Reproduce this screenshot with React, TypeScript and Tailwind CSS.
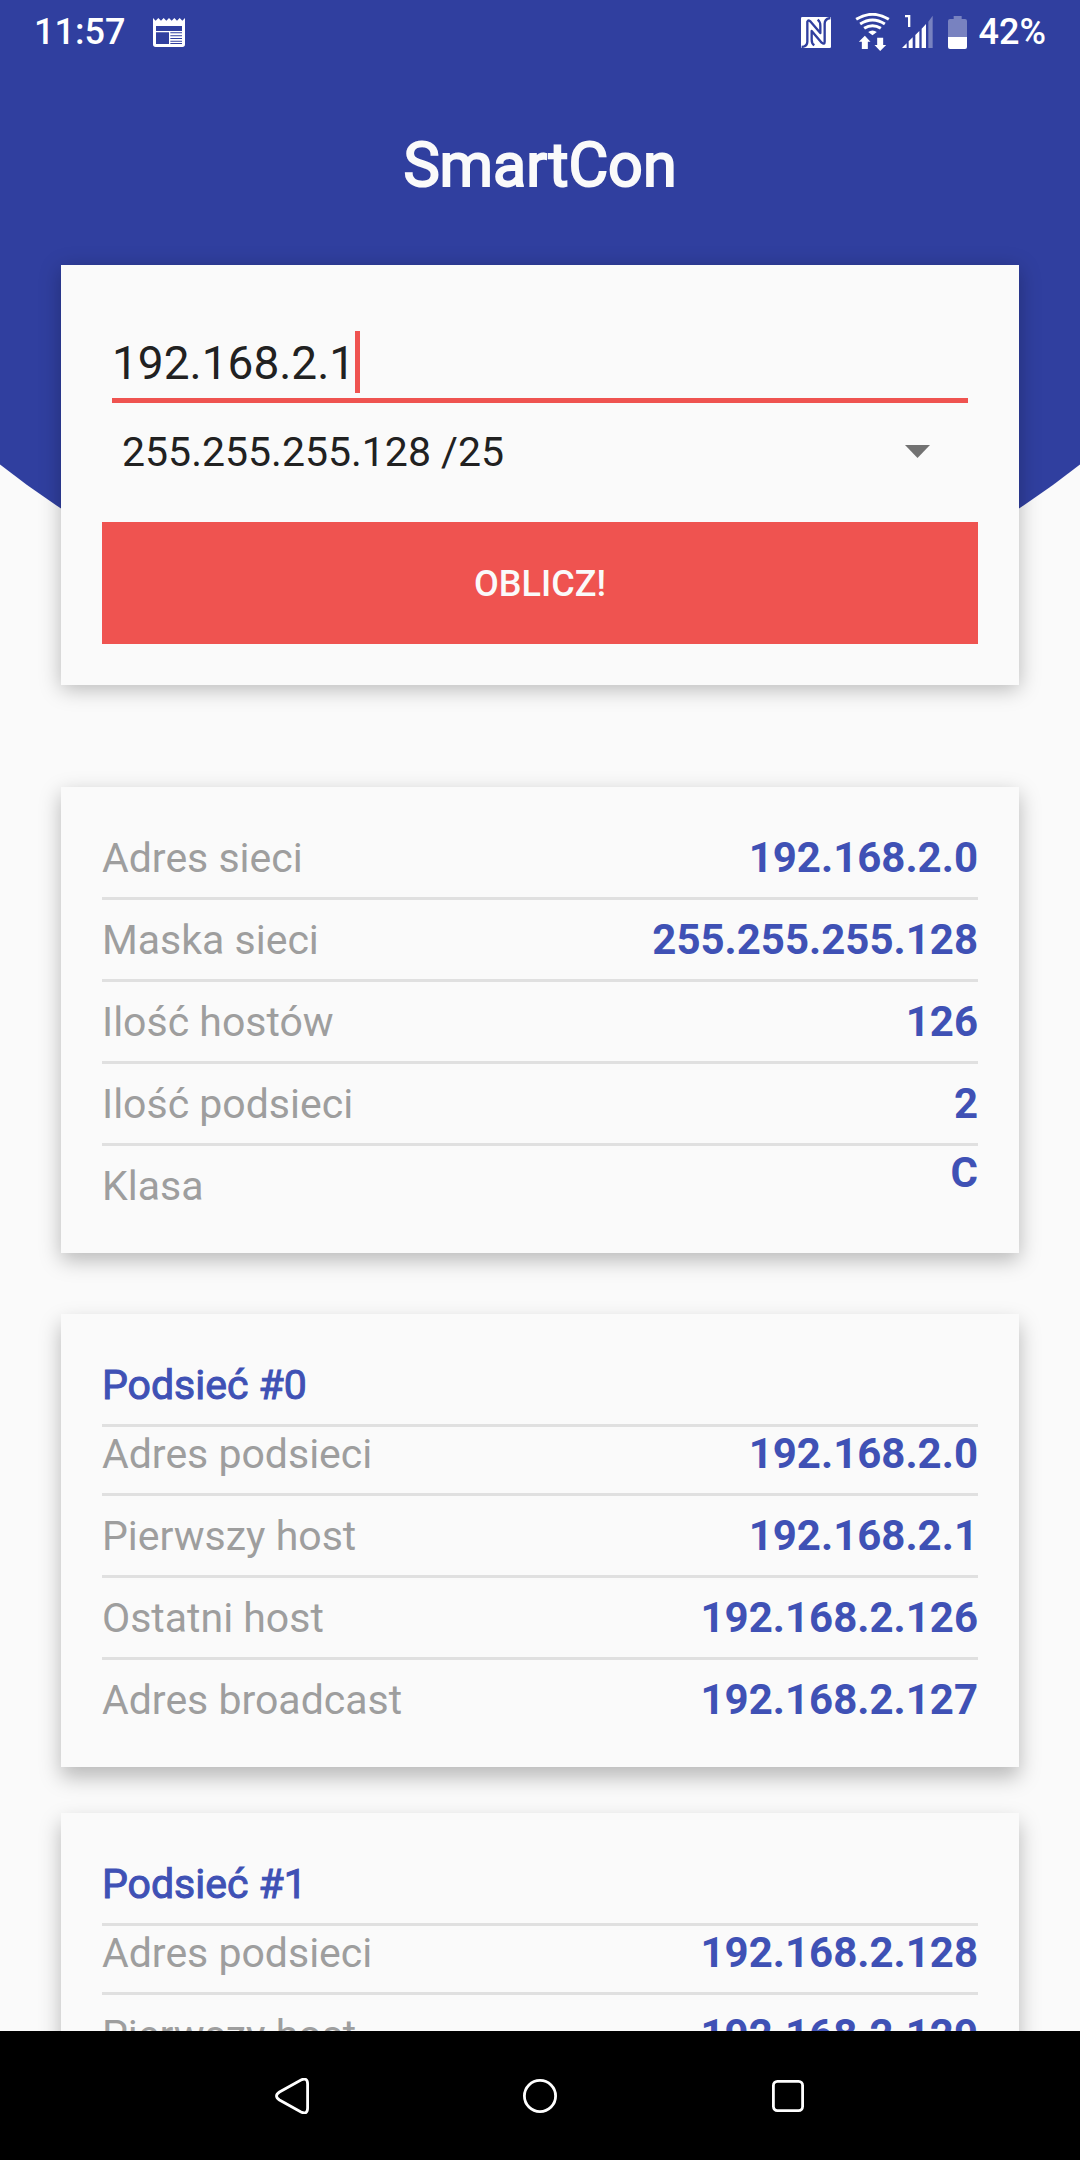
import { useState } from "react";
import type { ReactNode } from "react";

type Entry = { label: string; value: string };

const MASKS = [
  "255.255.255.0 /24",
  "255.255.255.128 /25",
  "255.255.255.192 /26",
  "255.255.255.224 /27",
];

const NETWORK: Entry[] = [
  { label: "Adres sieci", value: "192.168.2.0" },
  { label: "Maska sieci", value: "255.255.255.128" },
  { label: "Ilość hostów", value: "126" },
  { label: "Ilość podsieci", value: "2" },
  { label: "Klasa", value: "C" },
];

const SUBNETS: { title: string; entries: Entry[] }[] = [
  {
    title: "Podsieć #0",
    entries: [
      { label: "Adres podsieci", value: "192.168.2.0" },
      { label: "Pierwszy host", value: "192.168.2.1" },
      { label: "Ostatni host", value: "192.168.2.126" },
      { label: "Adres broadcast", value: "192.168.2.127" },
    ],
  },
  {
    title: "Podsieć #1",
    entries: [
      { label: "Adres podsieci", value: "192.168.2.128" },
      { label: "Pierwszy host", value: "192.168.2.129" },
      { label: "Ostatni host", value: "192.168.2.254" },
      { label: "Adres broadcast", value: "192.168.2.255" },
    ],
  },
];

function NewsIcon() {
  return (
    <svg viewBox="0 0 96 87" className="h-[29px] w-8" aria-hidden="true">
      <path
        fill="#fff"
        fillRule="evenodd"
        d="M0 0l8 8 8-8 8 8 8-8 8 8 8-8 8 8 8-8 8 8 8-8 8 8 8-8V79q0 8-8 8H8q-8 0-8-8ZM9 24V39H87V24ZM9 43V78H48V43ZM52 43V46H87V43ZM52 52V55H87V52ZM52 60V63H87V60ZM52 68V71H87V68ZM52 75V78H87V75Z"
      />
    </svg>
  );
}

function NfcIcon() {
  return (
    <svg viewBox="0 0 90 93" className="h-[31px] w-[30px]" aria-hidden="true">
      <rect width="90" height="93" rx="4" fill="#fff" />
      <g fill="none" stroke="#303f9f" strokeWidth="7" strokeLinejoin="round">
        <path d="M2 90Q19 88 19 74V14Q22 7 29 14L58 48V26Q58 14 50 8" />
        <path d="M40 85Q32 80 32 68V42L62 77Q71 84 71 74V20Q71 5 88 3" />
      </g>
    </svg>
  );
}

function WifiIcon() {
  return (
    <svg viewBox="0 0 104 114" className="h-[38px] w-[35px]" aria-hidden="true">
      <g fill="none" stroke="#fff" strokeWidth="9">
        <path d="M3 19Q52-11 101 19" />
        <path d="M15 33Q52 9 89 33" />
        <path d="M27 46Q52 30 77 46" />
      </g>
      <path
        fill="#fff"
        d="M39 57Q52 48 65 57L52 67ZM29 68L46 86H38V108H20V86H11ZM75 114L58 96H66V74H84V96H93Z"
      />
    </svg>
  );
}

function SignalIcon() {
  return (
    <svg viewBox="0 0 96 102" className="h-[34px] w-8" aria-hidden="true">
      <g fill="#fff">
        <path d="M9 0H25V36H18V7H9ZM0 99L14 85V99ZM20 79L32 67V99H20ZM40 60L52 48V99H40ZM59 41L72 27V99H59Z" />
        <path d="M79 20L92 2V99H79Z" opacity="0.35" />
      </g>
    </svg>
  );
}

function BatteryIcon() {
  return (
    <svg viewBox="0 0 57 99" className="h-[33px] w-[19px]" aria-hidden="true">
      <path
        fill="#fff"
        opacity="0.35"
        d="M17 0H41V9H51Q57 9 57 15V63H0V15Q0 9 6 9H17Z"
      />
      <path fill="#fff" d="M0 63H57V93Q57 99 51 99H6Q0 99 0 93Z" />
    </svg>
  );
}

function StatusBar() {
  return (
    <div className="flex h-16 items-center justify-between px-[34px] text-4xl font-medium text-white">
      <div className="flex items-center gap-7">
        <span>11:57</span>
        <NewsIcon />
      </div>
      <div className="flex items-center">
        <NfcIcon />
        <span className="ml-6">
          <WifiIcon />
        </span>
        <span className="ml-3">
          <SignalIcon />
        </span>
        <span className="ml-3.5">
          <BatteryIcon />
        </span>
        <span className="ml-3">42%</span>
      </div>
    </div>
  );
}

// Indigo disc behind the header, its lower edge hidden by the form card.
function Backdrop() {
  return (
    <svg
      viewBox="0 0 1080 652"
      className="absolute inset-x-0 top-0 -z-10 w-full"
      aria-hidden="true"
    >
      <circle cx="540" cy="-219" r="871" fill="#303f9f" />
    </svg>
  );
}

function Row({ label, value, pad }: Entry & { pad: string }) {
  return (
    <div
      className={`flex items-start justify-between border-b-3 border-[#e0e0e0] last:border-b-0 ${pad}`}
    >
      <dt className="text-[#9e9e9e]">{label}</dt>
      <dd className="text-[42px] font-bold text-[#3f51b5]">{value}</dd>
    </div>
  );
}

function Card({ shadow, children }: { shadow: string; children: ReactNode }) {
  return (
    <section
      className={`bg-[#fafafa] px-[41px] pt-[31px] pb-7 text-[41px] leading-[48px] ${shadow}`}
    >
      {children}
    </section>
  );
}

function CalculatorForm() {
  const [address, setAddress] = useState("192.168.2.1");
  const [mask, setMask] = useState("255.255.255.128 /25");

  return (
    <form
      className="bg-[#fafafa] px-[41px] pt-[66px] pb-[41px] text-[#212121] shadow-[0_4px_20px_rgba(0,0,0,0.27)]"
      onSubmit={(event) => event.preventDefault()}
    >
      <div className="mx-2.5 flex items-center border-b-5 border-[#ef5350] pb-[5px]">
        <input
          aria-label="Adres IP"
          className="field-sizing-content h-[62px] pt-0.5 text-[46px] caret-transparent outline-none"
          inputMode="decimal"
          value={address}
          onChange={(event) => setAddress(event.target.value)}
        />
        <span className="h-[62px] w-[5px] bg-[#ef5350]" />
      </div>

      <div className="relative">
        <select
          aria-label="Maska"
          className="block h-[98px] w-full appearance-none px-5 pt-0.5 text-[41px] outline-none"
          value={mask}
          onChange={(event) => setMask(event.target.value)}
        >
          {MASKS.map((option) => (
            <option key={option}>{option}</option>
          ))}
        </select>
        <svg
          viewBox="0 0 25 13"
          className="pointer-events-none absolute top-[42px] right-12 h-[13px] w-[25px]"
          aria-hidden="true"
        >
          <path d="M0 0H25L12.5 13Z" fill="#727272" />
        </svg>
      </div>

      <button
        type="submit"
        className="mt-[21px] block h-[122px] w-full bg-[#ef5350] pt-0.5 text-4xl font-medium text-[#fafafa]"
      >
        OBLICZ!
      </button>
    </form>
  );
}

function NavigationBar() {
  return (
    <nav
      aria-label="System"
      className="flex h-[129px] shrink-0 items-center justify-center gap-[212px] bg-black"
    >
      <button type="button" aria-label="Wstecz">
        <svg viewBox="0 0 36 36" className="size-9" aria-hidden="true">
          <path
            d="M27 2Q33.6-1 33.6 6V30Q33.6 37 27 34L5.500 22Q-.5 18 5.500 14Z"
            fill="none"
            stroke="#fff"
            strokeWidth="2.8"
          />
        </svg>
      </button>
      <button type="button" aria-label="Ekran główny">
        <svg viewBox="0 0 36 36" className="size-9" aria-hidden="true">
          <circle cx="18" cy="18" r="15.6" fill="none" stroke="#fff" strokeWidth="2.8" />
        </svg>
      </button>
      <button type="button" aria-label="Ostatnie">
        <svg viewBox="0 0 36 36" className="size-9" aria-hidden="true">
          <rect
            x="3.4"
            y="3.4"
            width="29.2"
            height="29.2"
            rx="4"
            fill="none"
            stroke="#fff"
            strokeWidth="2.8"
          />
        </svg>
      </button>
    </nav>
  );
}

export default function App() {
  return (
    <div className="flex h-screen flex-col bg-[#fafafa] font-['Roboto',sans-serif]">
      <div className="relative isolate min-h-0 flex-1 overflow-hidden">
        <Backdrop />
        <StatusBar />

        <h1 className="mt-[65px] mb-16 text-center text-[61px] leading-[72px] text-[#fafafa] [-webkit-text-stroke:2px_currentColor]">
          SmartCon
        </h1>

        <main className="mx-[61px]">
          <CalculatorForm />

          <div className="mt-[102px] mb-[61px]">
            <Card shadow="shadow-[0_7px_20px_rgba(0,0,0,0.27)]">
              <dl>
                {NETWORK.map((entry, i) => (
                  <Row
                    key={entry.label}
                    {...entry}
                    // the class letter sits at the top of its row
                    pad={
                      i === NETWORK.length - 1
                        ? "pb-[15px] [&>dd]:pt-[3px] [&>dt]:pt-4"
                        : "pt-4 pb-[15px]"
                    }
                  />
                ))}
              </dl>
            </Card>
          </div>

          <div className="flex flex-col gap-[46px]">
            {SUBNETS.map((subnet) => (
              <Card key={subnet.title} shadow="shadow-[0_10px_20px_rgba(0,0,0,0.27)]">
                <h2 className="border-b-3 border-[#e0e0e0] pt-4 pb-[15px] text-[#3f51b5] [-webkit-text-stroke:1px_currentColor]">
                  {subnet.title}
                </h2>
                <dl>
                  {subnet.entries.map((entry, i) => (
                    <Row
                      key={entry.label}
                      {...entry}
                      pad={i === 0 ? "pt-[3px] pb-[15px]" : "pt-4 pb-[15px]"}
                    />
                  ))}
                </dl>
              </Card>
            ))}
          </div>
        </main>
      </div>

      <NavigationBar />
    </div>
  );
}
